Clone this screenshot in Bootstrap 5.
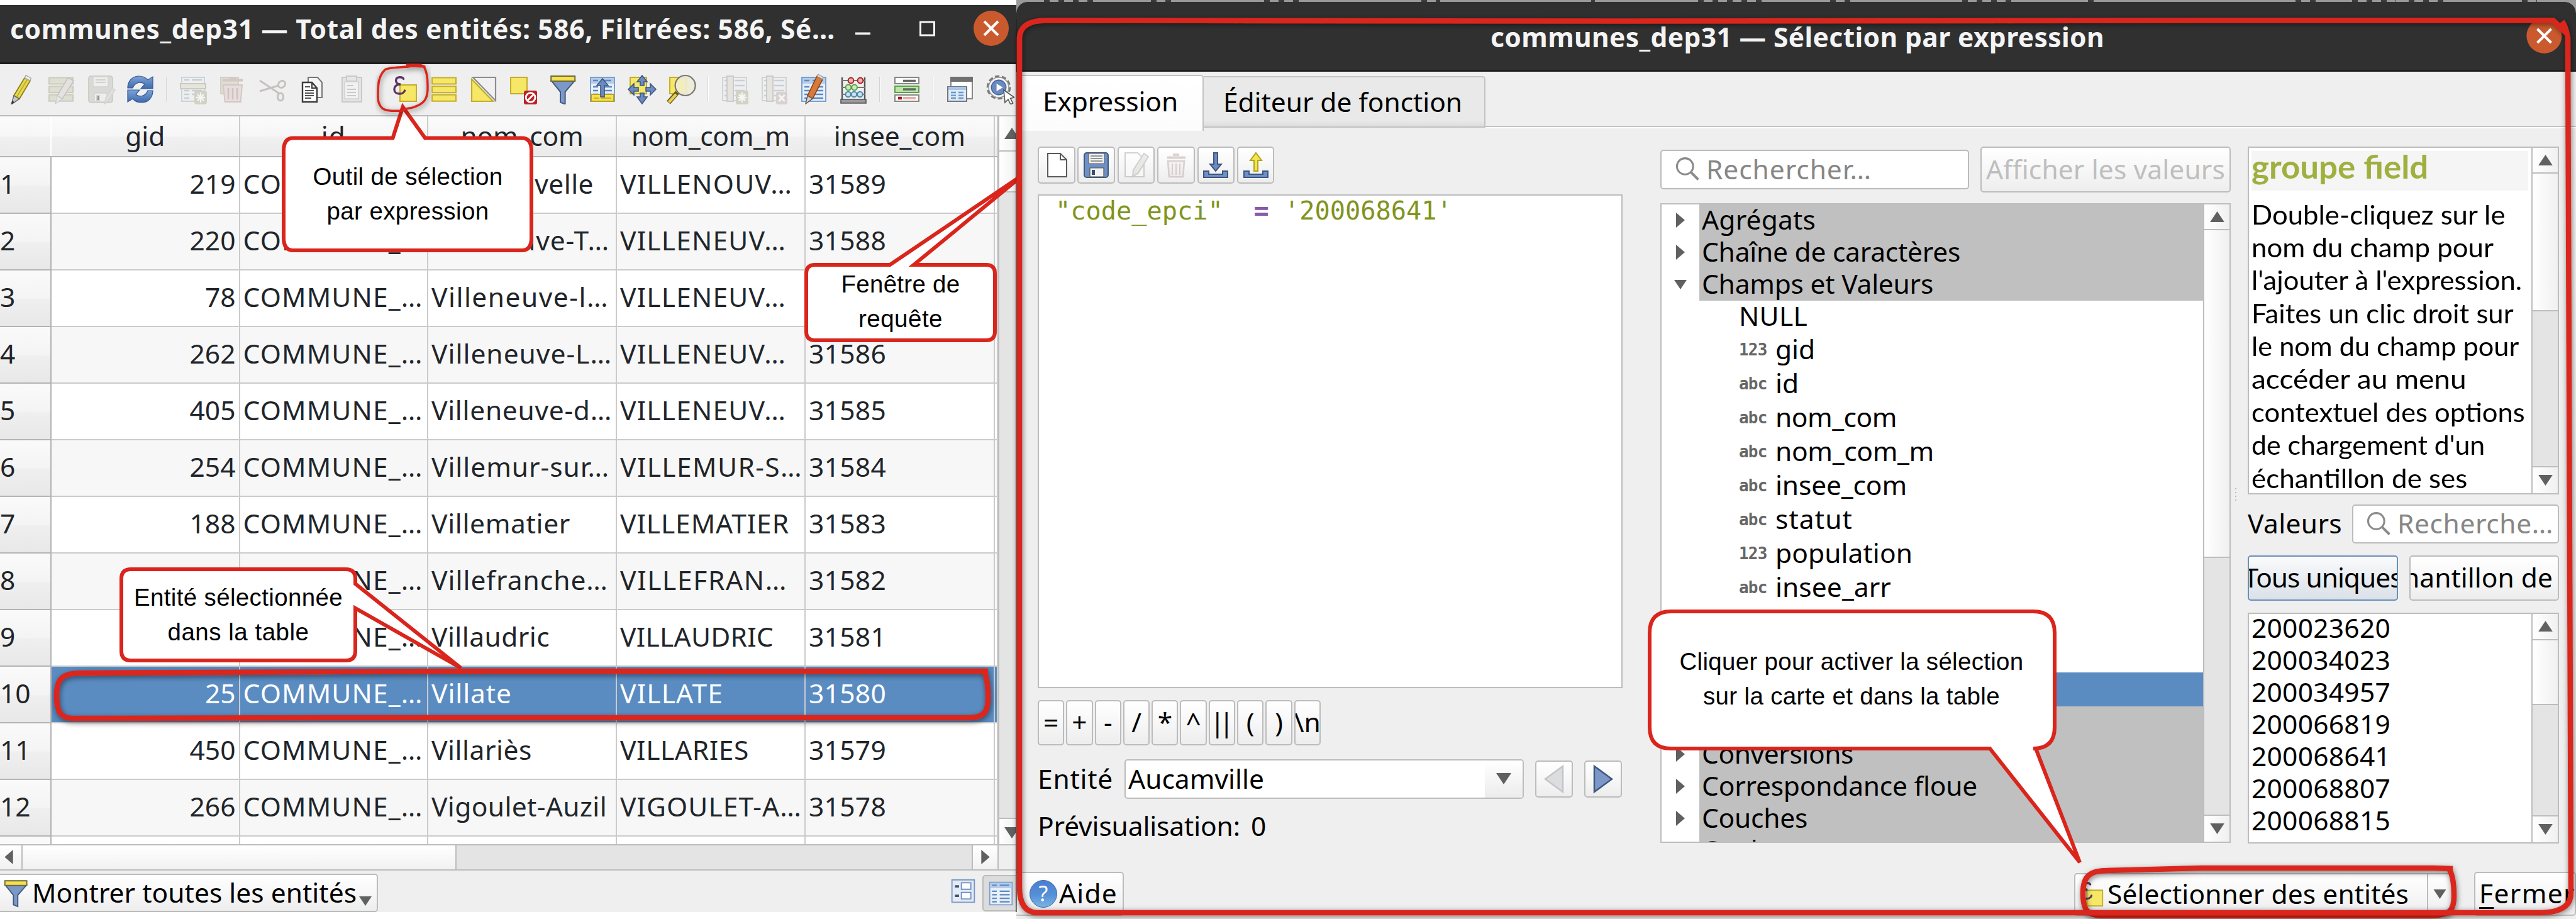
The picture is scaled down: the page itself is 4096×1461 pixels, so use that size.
<!DOCTYPE html>
<html lang="fr">
<head>
<meta charset="utf-8">
<title>communes_dep31 — Sélection par expression</title>
<link href="https://cdn.jsdelivr.net/npm/bootstrap@5.3.0/dist/css/bootstrap.min.css" rel="stylesheet">
<style>
:root{--line:#bdbdbd;--face:#efefef;--sel:#5a8cc2;--red:#da251c}
html,body{margin:0;background:#fff}
body{width:4096px;height:1461px;overflow:hidden;font-family:"Noto Sans","Open Sans",sans-serif;font-size:42.5px;line-height:1;color:#000}
.desk{width:4096px;height:1461px;overflow:hidden}
.t{display:inline-block;white-space:nowrap;flex:none}
svg{display:block;flex:none}
/* windows */
.attr-win{width:1616px;height:1442.5px;margin-top:7.5px;background:var(--face);overflow:hidden}
.titlebar{background:#303030;color:#f4f4f4;font-weight:700;border-bottom:3px solid #1e1e1e}
.attr-win .titlebar{height:94.5px}
.toolstrip{height:83px;border-bottom:2px solid #bbb;padding-left:2px}
.tool{width:63.05px;height:80px}
.toolsep{width:21px;height:80px}
.toolsep i{display:block;width:2px;height:40px;background:#fff;border-left:1px solid #d4d4d4}
.off{opacity:.42}
/* attribute table */
.grid-area{height:1156.5px}
.attr-table{width:1587px;table-layout:fixed;border-collapse:collapse;margin:0;background:#fff;--bs-table-bg:transparent}
.attr-table th,.attr-table td{padding:0 0 2px 5px!important;height:90px;border:2px solid #cbcbcb;border-left-width:0;border-top:0;vertical-align:middle;font-weight:400;white-space:nowrap;overflow:hidden;box-shadow:none!important}
.attr-table thead th{height:63.5px;text-align:center;padding:0!important;background:linear-gradient(#fbfbfb,#f6f6f6 50%,#f0f0f0 52%,#ebebeb);border-bottom:2.5px solid #b4b4b4}
.attr-table tbody th{padding-left:0!important;background:linear-gradient(#fafafa,#f4f4f4 50%,#efefef 52%,#e8e8e8);border-color:#b4b4b4}
.attr-table tbody tr:nth-child(even) td{background:#f7f7f7}
.attr-table tbody tr.picked td{background:var(--sel);color:#fff}
.attr-table td.num{text-align:right;padding-right:5px!important}
/* scroll bars */
.vbar{border-left:2px solid var(--line);background:#e4e4e4;flex:none}
.vbar .btnbox,.vbar .thumb{background:linear-gradient(90deg,#fff,#f0f0f0);border-bottom:2px solid var(--line)}
.vbar .btnbox.end{border-top:2px solid var(--line);border-bottom:0;margin-top:auto}
.hbar{height:42px;border-top:2px solid var(--line);border-bottom:2px solid var(--line);background:#e4e4e4}
.hbar div{background:linear-gradient(#fff,#f1f1f1);height:100%}
/* buttons and inputs */
.qb{background:linear-gradient(#fff,#f7f7f7 50%,#ededed);border:2px solid #bcbcbc;border-radius:5px;padding:0;overflow:hidden;color:#000;font-size:inherit;line-height:1;flex:none}
.inp{background:#fff;border:2px solid #bcbcbc;border-radius:5px;flex:none;overflow:hidden}
.box{background:#fff;border:2px solid var(--line);overflow:hidden;flex:none}
.bars{letter-spacing:-9px;margin-right:9px}
/* expression window */
.expr-col{width:2480px;height:1461px;background:#9a9a9a}
.expr-win{margin-top:3px;height:1458px;background:var(--face);border-radius:18px 18px 0 0;overflow:hidden}
.expr-win .titlebar{height:110.5px}
.tabs{height:89px}
.tab-on{width:298px;height:89px;margin-top:5px;background:linear-gradient(#fff,#fcfcfc);border:2px solid #c3c3c3;border-left:0;border-bottom:0;border-radius:0 5px 0 0}
.tab-off{width:448px;height:82px;margin-top:7px;background:linear-gradient(#e9e9e9 88%,#dcdcdc);border:2px solid #c3c3c3;border-left:0;border-radius:0 5px 0 0}
.tab-rest{height:88px;border-bottom:2px solid #c3c3c3;box-shadow:0 2px #fff}
.code{font-family:"DejaVu Sans Mono",monospace;font-size:40.3px;color:#7f9420;white-space:pre}
.code b{color:#8959a8}
.tree-row{height:51px}
.tree-row.f{height:54px}
.twist{width:60px;height:51px;background:#fff}
.grp{background:#c0c0c0;height:51px;padding:3px 0 0 4px}
.kind{font-family:"DejaVu Sans Mono",monospace;font-weight:700;font-size:26px;color:#666;width:58px;letter-spacing:-.8px}
.help{font-family:Lato,"Open Sans",sans-serif}
.help h1{font:inherit;font-weight:700;font-size:51px;color:#9fb03f;background:#f5f5f5;height:63px;margin:5px 5px 0 4px;line-height:50px;padding-left:0}
.help .t,.help h1 .t{transform-origin:0 50%}
.help .ln{height:52.4px;line-height:52.4px;padding-left:4px;white-space:nowrap}
.grey{color:#868686}
.notes{position:absolute;left:0;top:0}
.says{position:absolute;font-family:"Liberation Sans",Arial,sans-serif;font-size:38.5px;text-align:center;line-height:55.4px}
</style>
<script src="https://cdn.jsdelivr.net/npm/bootstrap@5.3.0/dist/js/bootstrap.bundle.min.js"></script>
</head>
<body>
<svg width="0" height="0" class="position-absolute">
 <defs>
  <linearGradient id="blu" x1="0" y1="0" x2="0" y2="1"><stop offset="0" stop-color="#7fa3d6"/><stop offset="1" stop-color="#3f69ab"/></linearGradient>
  <linearGradient id="hlp" x1="0" y1="0" x2="0" y2="1"><stop offset="0" stop-color="#4a7ed0"/><stop offset=".55" stop-color="#5590d6"/><stop offset="1" stop-color="#7cb4e6"/></linearGradient>
  <symbol id="pen" viewBox="0 0 24 24"><path d="M6 17 14.6 2.8 19 5.2 10.4 19.6Z" fill="#e8d94a" stroke="#8b7d1c" stroke-width=".9"/><path d="M8.2 18.2 16.8 4" stroke="#b7a82c" stroke-width=".8"/><path d="m14.6 2.8 1-1.9L19.6 3 19 5.2Z" fill="#f2f0ee" stroke="#aaa" stroke-width=".7"/><path d="M6 17 4 24l6.4-4.4Z" fill="#c9c4bd" stroke="#666" stroke-width=".7"/><path d="m4 24 .8-3 1.7 1.3Z" fill="#333"/></symbol>
  <symbol id="rows" viewBox="0 0 24 24"><g fill="#f6e866" stroke="#c4ad2c"><path d="M2.500 2.700h19v5h-19zM2.500 9.600h19v5h-19zM2.500 16.400h19v5h-19z"/></g></symbol>
  <symbol id="multi" viewBox="0 0 24 24"><g fill="#c9c7a8" stroke="#9c9a80"><path d="M2.500 2.700h19v5h-19zM2.500 9.600h19v5h-19zM2.500 16.400h19v5h-19z"/></g><path d="M9 17 17.600 2.800 22 5.200 13 19.600Z" fill="#d6cfc8" stroke="#8a8580" stroke-width=".8"/><path d="M9 17 7.500 23.500 13 19.600Z" fill="#ddd" stroke="#999" stroke-width=".6"/></symbol>
  <symbol id="save0" viewBox="0 0 24 24"><rect x="2.500" y="1.500" width="19" height="21" rx="2" fill="#bcbcb4" stroke="#a3a38f"/><path d="M6 2h12v8H6zM7 15h10v7H7z" fill="#eee" stroke="#aaa" stroke-width=".7"/><path d="M8 4.500h8M8 6.500h8M9 17h2v4H9z" stroke="#aaa"/><path d="m15 24 1-5 5-8 2.500 1.500-5 8Z" fill="#cfc7c2" stroke="#aaa" stroke-width=".6"/></symbol>
  <symbol id="sync" viewBox="0 0 24 24"><path d="M2 11C2 5 6 1.500 11 1.500c3 0 5.300 1 7 3L22 2v9.500H12.500L15.500 8C13 5.700 8 6 6 11Z" fill="url(#blu)" stroke="#2f5a9c" stroke-width=".6"/><path d="M22 13c0 6-4 9.500-9 9.500-3 0-5.300-1-7-3L2 22v-9.500h9.500L8.500 16c2.500 2.300 7.500 2 9.500-3Z" fill="url(#blu)" stroke="#2f5a9c" stroke-width=".6"/></symbol>
  <symbol id="addrow" viewBox="0 0 24 24"><path d="M3 2.500h18v19H3z" fill="#eef1f3" stroke="#9db0bd"/><path d="M5 4.500h4M11 4.500h8M5 13h4M11 13h8M5 16h4M11 16h5M5 19h4" stroke="#8fa2b2" stroke-width="1.300"/><path d="M2 7.500h20v4H2z" fill="#d8d8c8" stroke="#999980"/><rect x="13" y="13" width="10" height="11" rx="2" fill="#a9a98d"/><path d="M18 14.500v8M14.500 18.500h7M15.500 16l5 5M20.500 16l-5 5" stroke="#fff" stroke-width="1.200"/></symbol>
  <symbol id="bin0" viewBox="0 0 24 24"><path d="M2.500 2.500h14v13h-14z" fill="#c9c7a8" stroke="#a9a78c"/><path d="M4 4.700h16M9 3.500h6" stroke="#b39090" stroke-width="2"/><path d="M4.500 8.500h15l-1.200 13.500h-12.500z" fill="#dcc9c6" stroke="#b39090"/><path d="M8.500 11v9M12 11v9M15.500 11v9" stroke="#a98484" stroke-width="1.300"/></symbol>
  <symbol id="cut0" viewBox="0 0 24 24" ><g fill="none" stroke="#8f8484" stroke-width="1.500"><path d="M2 5 17 15M2 13.500 17 9"/><ellipse cx="19.500" cy="8" rx="3" ry="2.500" transform="rotate(-40 19.500 8)"/><ellipse cx="18.500" cy="18" rx="2.300" ry="3"/></g></symbol>
  <symbol id="copy" viewBox="0 0 24 24"><path d="M9 2.500h7.500l3.500 4v12H9z" fill="#f5f5f5" stroke="#777"/><path d="M4.500 6.500h7.500l4 4.500v11H4.500z" fill="#fff" stroke="#3c3c3c" stroke-width="1.200"/><path d="M12 6.500v4.500h4" fill="none" stroke="#3c3c3c"/><path d="M6.500 10h4M6.500 13h7M6.500 15h7M6.500 17h7M6.500 19h5" stroke="#555" stroke-width=".9"/></symbol>
  <symbol id="paste0" viewBox="0 0 24 24"><path d="M4.500 2.500h15.500v19.500h-15.500z" fill="#d3d3cb" stroke="#999"/><path d="M8 1.500h8v4H8z" fill="#ddd" stroke="#999"/><path d="M6.500 6h11v13.500h-11z" fill="#f6f6f6" stroke="#aaa" stroke-width=".8"/><path d="M8.500 9h5M8.500 12h7M8.500 14.500h7M8.500 17h7" stroke="#999"/></symbol>
  <symbol id="eps" viewBox="0 0 24 24"><path d="M8.500 8.500h13v13h-13z" fill="#f6e866" stroke="#c4ad2c"/><path d="M11.300 3.700C10.500 1.800 5.300 1.700 5.300 5c0 2.300 2.200 3 3.700 3-3 0-5 1.500-5 4.200 0 4.300 7.200 4.300 8.300.8" fill="none" stroke="#5c3566" stroke-width="1.700" stroke-linecap="round"/></symbol>
  <symbol id="invert" viewBox="0 0 24 24"><path d="M3.500 2.500h18v18.500z" fill="#f0f0f0" stroke="#8c8c8c" stroke-width="1.100"/><path d="M2.500 4v17.500h17z" fill="#f6e866" stroke="#c4ad2c" stroke-width="1.100"/></symbol>
  <symbol id="desel" viewBox="0 0 24 24"><path d="M2 2.500h13v13H2z" fill="#f6e866" stroke="#c4ad2c"/><rect x="12.500" y="13" width="10.500" height="11" rx="1.500" fill="#bd2126"/><circle cx="17.800" cy="18.500" r="3.700" fill="none" stroke="#fff" stroke-width="1.400"/><path d="m15.300 21 5-5" stroke="#fff" stroke-width="1.400"/></symbol>
  <symbol id="fun" viewBox="0 0 24 24"><path d="M3 5.300 10 14v8.300l3.800 1.500V14L21.300 5.300z" fill="#7b98c8" stroke="#41597f"/><path d="M2.600 1.500h19v4h-19z" fill="#f6e14c" stroke="#6b6a3c"/></symbol>
  <symbol id="form" viewBox="0 0 24 24"><path d="M2.500 2.500h19v19h-19z" fill="#e7f0fa" stroke="#7ba0d0"/><path d="M3 3h18v4.500H3z" fill="#b5cdea"/><path d="M4.500 5h4M11 5h8M4.500 10h4M11 10h8.500M4.500 13h4M11 13h8.500M4.500 16h4M11 16h8.500M4.500 19h4M11 19h8.500" stroke="#5f88be" stroke-width="1.200"/></symbol>
  <symbol id="top" viewBox="0 0 24 24"><use href="#form"/><path d="M3 16h18v5.500H3z" fill="#f6e14c" stroke="#b9a226"/><path d="M5 19h4M11 19h8" stroke="#c9b22e"/><path d="M12 3.500 16.500 9h-3v9h-3V9h-3z" fill="#6b8bc0" stroke="#3d5680" stroke-width=".8"/></symbol>
  <symbol id="pan" viewBox="0 0 24 24"><path d="M2.500 2.500h13v13h-13z" fill="#f6e866" stroke="#c4ad2c"/><path d="M12 1l4 5h-2.500v3h-3V6H8zM12 23.500 8 18h2.500v-3h3v3H16zM1 12l4.500-4.500V10.500H9v3H5.500v3zM23 12l-4.500 4.500v-3H15v-3h3.500v-3z" fill="#6b8bc0" stroke="#3d5680" stroke-width=".8"/></symbol>
  <symbol id="zoomsel" viewBox="0 0 24 24"><path d="M2.500 2.500h13v13h-13z" fill="#f6e866" stroke="#c4ad2c"/><path d="M8.500 14.500 1.500 22.500" stroke="#6b5a18" stroke-width="3.800"/><path d="M7.500 16 1.800 22.200" stroke="#e9cf55" stroke-width="2.200"/><circle cx="14.800" cy="9" r="8" fill="#ecebd6" fill-opacity=".92" stroke="#777" stroke-width="1.100"/><path d="M9.500 3.800h5v10h-5z" fill="#f3eeb0" opacity=".7"/></symbol>
  <symbol id="col0" viewBox="0 0 24 24"><path d="M2.500 2.500h19v18.500h-19z" fill="#eef1f3" stroke="#a5b0b8"/><path d="M4 5h3M12 5h8M4 9h3M12 9h8M4 13h3M12 13h8M4 17h3M12 17h8" stroke="#98a6b2" stroke-width="1.200"/><path d="M6 1.500h5v20H6z" fill="#d8d5cc" stroke="#a09c92"/></symbol>
  <symbol id="coladd" viewBox="0 0 24 24"><use href="#col0"/><rect x="13" y="13" width="10" height="11" rx="1.500" fill="#a9a98d"/><path d="M18 14.500v8M14.500 18.500h7M15.500 16l5 5M20.500 16l-5 5" stroke="#fff" stroke-width="1.300"/></symbol>
  <symbol id="coldel" viewBox="0 0 24 24"><use href="#col0"/><rect x="13.500" y="14" width="9" height="10" rx="1.500" fill="#b9a8a4"/><path d="M15.700 16.500l4.600 5M20.300 16.500l-4.600 5" stroke="#fff" stroke-width="1.500"/></symbol>
  <symbol id="cfmt" viewBox="0 0 24 24"><use href="#form"/><path d="M7 17 14.500 1.500 19 4 11 19.500Z" fill="#d9793a" stroke="#8a4314" stroke-width=".8"/><path d="m14.500 1.500.8-1.500 4 2.200-.3 1.800z" fill="#e9e3dc" stroke="#999" stroke-width=".6"/><path d="M7 17 5.500 23.500l5.500-4z" fill="#d8d0c8" stroke="#555" stroke-width=".7"/></symbol>
  <symbol id="abac" viewBox="0 0 24 24"><path d="M3 2.500V21M21 2.500V21" stroke="#555" stroke-width="1.200"/><path d="M3 5h18M3 10.500h18M3 16h18" stroke="#777"/><path d="M2 20h20v3H2z" fill="#9a9a9a" stroke="#555" stroke-width=".8"/><g stroke-width="1"><g fill="#e9b4b4" stroke="#a82020"><ellipse cx="10" cy="5" rx="2.200" ry="2.200"/><ellipse cx="17.500" cy="5" rx="2.200" ry="2.200"/></g><g fill="#c9efbd" stroke="#5d9b4a"><ellipse cx="8" cy="10.500" rx="2.200" ry="2.200"/><ellipse cx="12.800" cy="10.500" rx="2.200" ry="2.200"/></g><g fill="#c9e4f3" stroke="#4b87a8"><circle cx="7.800" cy="16" r="2.100"/><circle cx="12.500" cy="16" r="2.100"/><circle cx="17.200" cy="16" r="2.100"/></g></g></symbol>
  <symbol id="cond" viewBox="0 0 24 24"><path d="M2.500 2.500h19v5h-19z" fill="#fff" stroke="#888"/><path d="M2.500 9.500h19v5h-19z" fill="#b9e6a5" stroke="#5ea049"/><path d="M2.500 16.500h19v5h-19z" fill="#fff" stroke="#888"/><path d="M9 5.200h10M9 12h10" stroke="#666" stroke-width="1.700"/><path d="M5 19h3" stroke="#9a1c1c" stroke-width="2.200"/><path d="M9 19h10" stroke="#e9a9a9" stroke-width="1.900"/></symbol>
  <symbol id="dock" viewBox="0 0 24 24"><path d="M5 2.500h17v17H5z" fill="#fff" stroke="#888"/><path d="M4.500 2h18v4h-18z" fill="#707070"/><path d="M2.500 10h15v11.500h-15z" fill="#dceafa" stroke="#777"/><path d="M3 10h14v2.500H3z" fill="#a9c6ea"/><path d="M5 14.500h4M11 14.500h4M5 16.800h4M11 16.800h4M5 19h4M11 19h4" stroke="#6d96cd" stroke-width="1.200"/></symbol>
  <symbol id="act" viewBox="0 0 24 24"><circle cx="11.500" cy="10.500" r="8.700" fill="#efefef" stroke="#777" stroke-width="1.900" stroke-dasharray="3.500 1.900"/><circle cx="11.500" cy="10.500" r="8" fill="#f4f4f4" stroke="#999" stroke-width=".8"/><circle cx="11.500" cy="10.500" r="5.800" fill="#6b8bc0" stroke="#41659f" stroke-width=".8"/><path d="m9.800 7.500 5 3-5 3z" fill="#fff"/><path d="M15.500 12.500 16.500 22.500l2.500-2.500 2 4 1.800-1-2-3.800 3.200-.7z" fill="#fff" stroke="#555" stroke-width=".8"/></symbol>
  <symbol id="lens" viewBox="0 0 24 24"><circle cx="10" cy="9.500" r="7" fill="none" stroke="#8b8b8b" stroke-width="1.700"/><path d="m15 14.500 6.500 6.500" stroke="#8b8b8b" stroke-width="2.200"/></symbol>
  <symbol id="page" viewBox="0 0 24 24"><path d="M5 3h10l5 5v13.500H5z" fill="#fff" stroke="#5a5a5a"/><path d="M15 3v5h5" fill="none" stroke="#5a5a5a"/></symbol>
  <symbol id="disk" viewBox="0 0 24 24"><rect x="2.500" y="2.500" width="19" height="19.500" rx="2" fill="#6f90c4" stroke="#41597f"/><path d="M6 3h12.500v8H6z" fill="#f3f3f3" stroke="#666" stroke-width=".6"/><path d="M7.500 5h9.500M7.500 7h9.500M7.500 9h9.500" stroke="#777" stroke-width=".8"/><path d="M7 14.500h11V21.500H7z" fill="#f3f3f3" stroke="#555" stroke-width=".6"/><path d="M8.500 16h2.500v4H8.500z" fill="#35507c"/></symbol>
  <symbol id="pgpen" viewBox="0 0 24 24"><path d="M3 2.500h10l5 5v14H3z" fill="#fff" stroke="#999"/><path d="M9.500 16 18 3l3.500 2.500L13.500 18.500 9 21.500z" fill="#d6d3cc" stroke="#999"/></symbol>
  <symbol id="bin1" viewBox="0 0 24 24"><path d="M5 6.200h14.500M9.500 4h5" stroke="#b39a9a" stroke-width="2"/><path d="M5.500 9h13l-1 12.500H6.500z" fill="#efe6e5" stroke="#b39a9a" stroke-width="1.300"/><path d="M9 11v9M12 11v9M15 11v9" stroke="#b39a9a"/></symbol>
  <symbol id="imp" viewBox="0 0 24 24"><path d="M10.500 2.500h3v9H16.500L12 17 7.500 11.500h3z" fill="#6b8bc0" stroke="#3d5680"/><path d="M2.500 17h4v2.500h11V17h4v5h-19z" fill="#6f90c4" stroke="#3d5680"/></symbol>
  <symbol id="exp" viewBox="0 0 24 24"><path d="M12 2.500 16.500 8.500h-3v8.500h-3V8.500h-3z" fill="#f4e550" stroke="#b1a51c"/><path d="M2.500 17h4v2.500h11V17h4v5h-19z" fill="#6f90c4" stroke="#3d5680"/></symbol>
  <symbol id="fview" viewBox="0 0 24 24"><path d="M2.500 2.500h19v19h-19z" fill="#e3ebf6" stroke="#7b96c4"/><path d="M5 8h3.500M5 16h3.500" stroke="#43536e" stroke-width="2"/><path d="M10.500 5h8v5.500h-8zM10.500 13.200h8v5.500h-8z" fill="#fff" stroke="#6f90c8"/></symbol>
  <symbol id="up" viewBox="0 0 24 18"><path d="M12 0 24 18H0z" fill="#606060"/></symbol>
  <symbol id="dn" viewBox="0 0 24 18"><path d="M0 0h24L12 18z" fill="#606060"/></symbol>
  <symbol id="lt" viewBox="0 0 14 24"><path d="M14 0v24L0 12z" fill="#606060"/></symbol>
  <symbol id="rt" viewBox="0 0 14 24"><path d="M0 0v24L14 12z" fill="#606060"/></symbol>
 </defs>
</svg>

<main class="desk d-flex position-relative">
 <!-- attribute table window -->
 <section class="attr-win flex-shrink-0 d-flex flex-column">
  <header class="titlebar d-flex align-items-center flex-shrink-0">
   <span class="t" style="padding:0 0 15px 16px" data-w="1307">communes_dep31 — Total des entités: 586, Filtrées: 586, Sé…</span>
   <svg class="ms-auto" width="256" height="91" viewBox="1360 7.500 256 91"><path d="M1360 51h24v3.500h-24z" fill="#f4f4f4"/><rect x="1463.500" y="34.500" width="22" height="21" fill="none" stroke="#f4f4f4" stroke-width="3"/><circle cx="1576" cy="44.500" r="28" fill="#ca5a2e"/><path d="m1565 33.500 22 22m0-22-22 22" stroke="#fff" stroke-width="4"/></svg>
  </header>
  <div class="toolstrip d-flex flex-shrink-0" id="tools"></div>
  <div class="grid-area d-flex flex-shrink-0 overflow-hidden">
   <table class="table attr-table flex-shrink-0">
    <colgroup><col style="width:81px"><col style="width:299.500px"><col style="width:299.500px"><col style="width:300px"><col style="width:300px"><col style="width:300.500px"><col></colgroup>
    <thead><tr><th style="border-right-color:transparent"></th><th><span class="t" data-w="58">gid</span></th><th><span class="t" data-w="34">id</span></th><th><span class="t" data-w="190">nom_com</span></th><th><span class="t" data-w="247">nom_com_m</span></th><th><span class="t" data-w="204">insee_com</span></th><th></th></tr></thead>
    <tbody id="rowsbody"></tbody>
   </table>
   <div class="vbar d-flex flex-column flex-grow-1">
    <div class="btnbox" style="height:56px"><svg width="20" height="18" viewBox="0 0 20 18" style="margin:18px 0 0 8px"><path d="M12 0 24 18H0z" fill="#606060"/></svg></div>
    <div class="thumb" style="height:65px"></div>
    <div class="btnbox end" style="height:42px"><svg width="20" height="18" viewBox="0 0 20 18" style="margin:13px 0 0 8px"><path d="M0 0h24L12 18z" fill="#606060"/></svg></div>
   </div>
  </div>
  <div class="hbar d-flex flex-shrink-0">
   <div class="d-flex align-items-center" style="width:36px;border-right:2px solid var(--line);padding-left:7px"><svg width="14" height="23"><use href="#lt"/></svg></div>
   <div style="width:690px;border-right:2px solid var(--line)"></div>
   <div class="ms-auto d-flex align-items-center justify-content-center" style="width:43px;border-left:2px solid var(--line);border-right:2px solid var(--line)"><svg width="14" height="23"><use href="#rt"/></svg></div>
   <div style="width:28px;background:var(--face)"></div>
  </div>
  <footer class="d-flex flex-grow-1">
   <div class="qb d-flex align-items-center" style="margin:5px 0 0 -4px;width:605px;height:61px"><svg width="44" height="47" style="margin-left:5px"><use href="#fun" width="44" height="47"/></svg><span class="t ms-1" data-w="511">Montrer toutes les entités</span><svg width="22" height="15" class="align-self-end mb-2" style="margin-left:3px"><use href="#dn"/></svg></div>
   <svg class="ms-auto" width="45" height="45" style="margin-top:10px"><use href="#fview"/></svg>
   <div style="width:58px;height:58px;margin:7px -4px 0 8px;background:#dcdcdc;border:2px solid #bbb;border-radius:5px;overflow:hidden"><svg width="45" height="45" style="margin:5px 0 0 5px"><use href="#form"/></svg></div>
  </footer>
 </section>

 <!-- expression dialog -->
 <section class="expr-col flex-shrink-0">
  <div class="expr-win d-flex flex-column">
   <header class="titlebar d-flex align-items-center flex-shrink-0">
    <span class="t" style="margin-left:754px;padding-top:4px" data-w="971">communes_dep31 — Sélection par expression</span>
    <svg class="ms-auto" width="80" height="107" viewBox="4016 3 80 107"><circle cx="4045.400" cy="57" r="28" fill="#ca5a2e"/><path d="m4034.500 46 22 22m0-22-22 22" stroke="#fff" stroke-width="4"/></svg>
   </header>
   <nav class="tabs d-flex flex-shrink-0">
    <div class="tab-on flex-shrink-0"><span class="t" style="padding:19px 0 0 42px" data-w="210">Expression</span></div>
    <div class="tab-off flex-shrink-0"><span class="t" style="padding:18px 0 0 31px" data-w="375">Éditeur de fonction</span></div>
    <div class="tab-rest flex-grow-1"></div>
   </nav>
   <div class="d-flex flex-shrink-0" style="padding:30px 0 0 34px;height:1138px">
    <!-- editor -->
    <div class="d-flex flex-column flex-shrink-0" style="width:930px">
     <div class="d-flex" id="edtools" style="gap:3.900px;height:59px"></div>
     <div class="box" style="margin-top:17px;height:785.500px;padding:1px 0 0 26px"><div class="code t">"code_epci"  <b>=</b> '200068641'</div></div>
     <div class="d-flex" id="ops" style="margin-top:18.500px;gap:3px;height:72px"></div>
     <div class="d-flex align-items-center" style="margin-top:22px;height:63px">
      <span class="t" style="width:138px" data-w="115">Entité</span>
      <div class="inp d-flex align-items-center" style="width:635px;height:63px"><span class="t" style="padding-left:4px" data-w="211">Aucamville</span><div class="ms-auto d-flex align-items-center justify-content-center h-100" style="width:60px;background:linear-gradient(#fff,#ececec)"><svg width="24" height="18"><use href="#dn"/></svg></div></div>
      <div class="qb" style="width:60px;height:59px;margin-left:18px"><svg width="56" height="55" viewBox="0 0 56 55"><path d="M42 7v41L14 27.500z" fill="#dcdddf" stroke="#c3c5c8" stroke-width="2.500"/></svg></div>
      <div class="qb" style="width:60px;height:59px;margin-left:18px"><svg width="56" height="55" viewBox="0 0 56 55"><path d="M14 7v41l28-20.500z" fill="#7b98c8" stroke="#41597f" stroke-width="2.500"/></svg></div>
     </div>
     <div class="d-flex" style="margin-top:22px"><span class="t" style="width:339px" data-w="317">Prévisualisation:</span><span class="t">0</span></div>
    </div>
    <!-- function tree -->
    <div class="d-flex flex-column flex-shrink-0" style="width:907px;margin-left:60px">
     <div class="d-flex align-items-center" style="height:73px">
      <div class="inp d-flex align-items-center" style="width:491px;height:63px"><svg width="44" height="44" style="margin-left:19px"><use href="#lens"/></svg><span class="t grey" style="margin-left:8px" data-w="258">Rechercher…</span></div>
      <div class="qb d-flex align-items-center ms-auto" style="width:398px;height:73px;color:#bebebe"><span class="t" style="margin-left:7px" data-w="375">Afficher les valeurs</span></div>
     </div>
     <div class="box d-flex" style="margin-top:17px;height:1017px">
      <div class="flex-grow-1 overflow-hidden" id="tree"></div>
      <div class="vbar d-flex flex-column" style="width:42px">
       <div class="btnbox d-flex align-items-center justify-content-center" style="height:41px"><svg width="23" height="17"><use href="#up"/></svg></div>
       <div class="thumb" style="height:521px"></div>
       <div class="btnbox end d-flex align-items-center justify-content-center" style="height:43px"><svg width="23" height="17"><use href="#dn"/></svg></div>
      </div>
     </div>
    </div>
    <div class="d-flex align-items-start justify-content-center flex-shrink-0" style="width:27px;padding:543px 11px 0 0"><i style="width:2px;height:24px;background:repeating-linear-gradient(#bbb 0 2px,transparent 2px 6px)"></i></div>
    <!-- help and values -->
    <div class="d-flex flex-column flex-shrink-0" style="width:495px">
     <div class="box d-flex" style="height:553px">
      <div class="help flex-grow-1 overflow-hidden"><h1><span class="t" data-x="276">groupe field</span></h1><div id="helptext" style="margin-top:12px"></div></div>
      <div class="vbar d-flex flex-column" style="width:42px">
       <div class="btnbox d-flex align-items-center justify-content-center" style="height:41px"><svg width="23" height="17"><use href="#up"/></svg></div>
       <div class="thumb" style="height:219px"></div>
       <div class="btnbox end d-flex align-items-center justify-content-center" style="height:43px"><svg width="23" height="17"><use href="#dn"/></svg></div>
      </div>
     </div>
     <div class="d-flex align-items-center" style="margin-top:16px;height:62px"><span class="t" data-w="145">Valeurs</span>
      <div class="inp d-flex align-items-center ms-auto" style="width:329px;height:62px"><svg width="44" height="44" style="margin-left:18px"><use href="#lens"/></svg><span class="t grey" style="margin-left:8px" data-w="243">Recherche…</span></div></div>
     <div class="d-flex justify-content-between" style="margin-top:19px;height:72px">
      <div class="qb d-flex align-items-center justify-content-center" style="width:239px;border-color:#6a8fb8;background:linear-gradient(#fafbfc,#e9edf2 50%,#dbe1e8)"><span class="t" data-w="247">Tous uniques</span></div>
      <div class="qb d-flex align-items-center justify-content-end" style="width:238px"><span class="t" style="margin-right:8px" data-w="277">Échantillon de</span></div>
     </div>
     <div class="box d-flex" style="margin-top:19px;height:367px">
      <div class="flex-grow-1 overflow-hidden" id="vals" style="padding-top:1px"></div>
      <div class="vbar d-flex flex-column" style="width:42px">
       <div class="btnbox d-flex align-items-center justify-content-center" style="height:42px"><svg width="23" height="17"><use href="#up"/></svg></div>
       <div class="thumb" style="height:103px"></div>
       <div class="btnbox end d-flex align-items-center justify-content-center" style="height:43px"><svg width="23" height="17"><use href="#dn"/></svg></div>
      </div>
     </div>
    </div>
   </div>
   <footer class="d-flex flex-grow-1" style="padding-top:45px">
    <div class="qb d-flex align-items-center" style="width:174px;height:70px;margin-left:-3px"><svg width="46" height="46" viewBox="0 0 46 46" style="margin-left:21px"><circle cx="23" cy="23" r="21.500" fill="url(#hlp)" stroke="#3e6cab"/><text x="23" y="35" text-anchor="middle" font-size="34" fill="#fff" font-family="Noto Sans">?</text></svg><span class="t" style="margin-left:2px" data-w="88">Aide</span></div>
    <div class="qb d-flex align-items-center" style="width:602px;height:68px;margin:2px 0 0 1511px"><svg width="46" height="46" style="margin-left:2px"><use href="#eps"/></svg><span class="t" style="margin-left:3px" data-w="474">Sélectionner des entités</span><div class="h-100 d-flex align-items-center justify-content-center ms-auto" style="border-left:2px solid #bcbcbc;width:39px"><svg width="23" height="15"><use href="#dn"/></svg></div></div>
    <div class="qb d-flex align-items-center" style="width:162px;height:70px;margin-left:34px"><span class="t" style="margin-left:6px" data-w="148"><u style="text-underline-offset:6px;text-decoration-thickness:3px">F</u>ermer</span></div>
   </footer>
  </div>
 </section>

 <!-- red annotations -->
 <svg class="notes" width="4096" height="1461" viewBox="0 0 4096 1461">
  <defs><filter id="sh" x="-5%" y="-20%" width="110%" height="140%"><feDropShadow dx="1" dy="3" stdDeviation="4" flood-opacity=".5"/></filter>
  <filter id="sh2" filterUnits="userSpaceOnUse" x="1600" y="0" width="2496" height="1461"><feDropShadow dx="1" dy="2" stdDeviation="4" flood-opacity=".5"/></filter>
  <clipPath id="leftside"><path d="M0 0h1619v1461H0z"/></clipPath></defs>
  <path d="M1660 1.500h90M1830 1.500h40M2010 1.500h60M2260 1.500h30M2530 1.500h6M2700 1.500h115M2910 1.500h40M3120 1.500h80M3320 1.500h12M3650 1.500h46M3740 1.500h70M3830 1.500h55M4010 1.500h24" stroke="#3a3a3a" stroke-width="3" stroke-dasharray="9 14"/>
  <path d="M1615.800 30V1450" stroke="#222" stroke-width="1.500"/>
  <g fill="#fff" stroke="#da251c" stroke-width="6">
   <path d="M467 219.500H624.500L640.500 170 676 219.500H830q15 0 15 20V378q0 20-15 20H466q-15 0-15-20V239.500q0-20 15-20Z"/>
   <path clip-path="url(#leftside)" d="M1415 421 1632 274 1453 421H1568q14 0 14 14v92q0 14-14 14H1296q-14 0-14-14v-92q0-14 14-14Z"/>
   <path d="M208 905H550q15 0 15 15v8L733 1062 565 967v68q0 15-15 15H208q-15 0-15-15V920q0-15 15-15Z"/>
   <path d="M2657 972H3233q34 0 34 34v150q0 34-34 34h4l70 181L3164 1190H2657q-34 0-34-34v-150q0-34 34-34Z"/>
  </g>
  <g fill="none" stroke="#da251c" stroke-linejoin="round">
   <g filter="url(#sh)">
    <path stroke-width="3.500" d="M646 103h21l8 3-20-1c-14 3-36 1-43 6-10 10-11 22-11 40 0 10 1 16 8 22 8 5 28 3 32 3 4-5 12-3 18-6 14-5 22-11 21-34 0-12-1-22-6-30"/>
   </g>
   <g filter="url(#sh)"><path stroke-width="8.500" d="M1571 1067 1545 1067H700L130 1070C100 1070 90 1078 90 1105s6 38 30 37l400-1H1540C1566 1141 1571 1130 1571 1110q0-30-6-42"/></g>
   <g filter="url(#sh)"><path stroke-width="8.500" d="M3900 1381 3870 1380H3500L3350 1384C3320 1384 3312 1396 3312 1420c0 28 8 36 34 36H3860C3895 1456 3902 1448 3902 1425q0-30-7-42"/></g>
   <g filter="url(#sh2)"><path stroke-width="8.500" d="M4082 54 4060 32.500H3500L2600 33.500 1665 32.500Q1621 32 1621 62V1410Q1621 1451 1650 1451H4040Q4088 1450 4088 1420L4083 60Q4080 42 4074 34"/></g>
  </g>
 </svg>
 <div class="says" style="left:451px;top:253px;width:395px"><span class="t" data-w="297">Outil de sélection</span><br><span class="t" data-w="253">par expression</span></div>
 <div class="says" style="left:1282px;top:424px;width:300px"><span class="t" data-w="184">Fenêtre de</span><br><span class="t" data-w="129">requête</span></div>
 <div class="says" style="left:193px;top:922px;width:372px"><span class="t" data-w="327">Entité sélectionnée</span><br><span class="t" data-w="220">dans la table</span></div>
 <div class="says" style="left:2623px;top:1024px;width:642px"><span class="t" data-w="542">Cliquer pour activer la sélection</span><br><span class="t" data-w="467">sur la carte et dans la table</span></div>
</main>

<script>
const $ = id => document.getElementById(id);
const ic = (n, off) => `<svg width="48" height="48"${off ? ' class="off"' : ''}><use href="#${n}"/></svg>`;
$('tools').innerHTML = 'pen multi! save0! sync | addrow! bin0! cut0! copy paste0! | eps rows invert desel fun top pan zoomsel | coladd! coldel! cfmt abac | cond | dock act'
  .split(' ').map(n => n === '|' ? '<div class="toolsep d-flex align-items-center justify-content-center flex-shrink-0"><i></i></div>'
    : `<div class="tool d-flex align-items-center justify-content-center flex-shrink-0">${ic(n.replace('!', ''), n.endsWith('!'))}</div>`).join('');
const data = [
 [219,'Villenouvelle',253,'VILLENOUV…',269,31589],[220,'Villeneuve-T…',278,'VILLENEUV…',259,31588],
 [78,'Villeneuve-l…',277,'VILLENEUV…',259,31587],[262,'Villeneuve-L…',282,'VILLENEUV…',259,31586],
 [405,'Villeneuve-d…',282,'VILLENEUV…',259,31585],[254,'Villemur-sur…',278,'VILLEMUR-S…',285,31584],
 [188,'Villematier',216,'VILLEMATIER',264,31583],[76,'Villefranche…',276,'VILLEFRAN…',261,31582],
 [171,'Villaudric',183,'VILLAUDRIC',239,31581],[25,'Villate',123,'VILLATE',159,31580],
 [450,'Villariès',155,'VILLARIES',200,31579],[266,'Vigoulet-Auzil',274,'VIGOULET-A…',284,31578]];
$('rowsbody').innerHTML = data.map((r, i) => `<tr${i === 9 ? ' class="picked"' : ''}><th>${i + 1}</th><td class="num">${r[0]}</td><td><span class="t" data-w="281">COMMUNE_…</span></td><td><span class="t" data-w="${r[2]}">${r[1]}</span></td><td><span class="t" data-w="${r[4]}">${r[3]}</span></td><td><span class="t" data-w="118">${r[5]}</span></td><td></td></tr>`).join('')
  + '<tr><th></th>' + '<td></td>'.repeat(6) + '</tr>';
$('edtools').innerHTML = 'page disk pgpen! bin1! imp exp'.split(' ').map(n => `<div class="qb d-flex align-items-center justify-content-center" style="width:59.500px">${ic(n.replace('!', ''), n.endsWith('!'))}</div>`).join('');
$('ops').innerHTML = ['=','+','-','/','*','^','||','(',')','\\n'].map(o => `<div class="qb d-flex align-items-center justify-content-center" style="width:42.300px"><span class="t${o === '||' ? ' bars' : ''}">${o}</span></div>`).join('');
const grp = (n, w, open) => `<div class="tree-row d-flex"><div class="twist d-flex align-items-center justify-content-center flex-shrink-0">${open ? '<svg width="24" height="15"><use href="#dn"/></svg>' : '<svg width="14" height="24"><use href="#rt"/></svg>'}</div><div class="grp flex-grow-1"><span class="t" data-w="${w}">${n}</span></div></div>`;
const fld = (k, n, w) => `<div class="tree-row f d-flex align-items-center" style="padding-left:123px"><span class="kind">${k}</span><span class="t" data-w="${w}">${n}</span></div>`;
$('tree').innerHTML = grp('Agrégats',176) + grp('Chaîne de caractères',406) + grp('Champs et Valeurs',363,1)
 + '<div class="tree-row" style="padding:3px 0 0 123px"><span class="t" data-w="104">NULL</span></div>'
 + fld('123','gid',58) + fld('abc','id',32) + fld('abc','nom_com',188) + fld('abc','nom_com_m',247) + fld('abc','insee_com',204)
 + fld('abc','statut',118) + fld('123','population',213) + fld('abc','insee_arr',179) + fld('abc','insee_dep',200) + '<div class="tree-row f"></div>'
 + '<div style="height:54px;padding-left:60px"><div class="h-100" style="background:var(--sel)"></div></div>'
 + '<div class="tree-row d-flex"><div class="twist flex-shrink-0"></div><div class="grp flex-grow-1"></div></div>'
 + grp('Conversions',236) + grp('Correspondance floue',433) + grp('Couches',163) + grp('Couleur',150);
$('helptext').innerHTML = [['Double-cliquez sur le',398],['nom du champ pour',380],["l'ajouter à l'expression.",425],['Faites un clic droit sur',412],['le nom du champ pour',420],['accéder au menu',337],['contextuel des options',430],["de chargement d'un",366],['échantillon de ses',338]]
  .map(l => `<div class="ln"><span class="t" data-x="${l[1]}">${l[0]}</span></div>`).join('');
$('vals').innerHTML = ['200023620','200034023','200034957','200066819','200068641','200068807','200068815'].map(v => `<div style="height:51px;padding-left:4px"><span class="t" data-w="216">${v}</span></div>`).join('');
/* spread each label over its set width */
document.querySelectorAll('[data-w]').forEach(e => {
  const r = document.createRange(); r.selectNodeContents(e);
  const n = e.textContent.length;
  e.style.letterSpacing = ((+e.dataset.w + 5 - r.getBoundingClientRect().width) / n).toFixed(3) + 'px';
});
document.querySelectorAll('[data-x]').forEach(e => {
  e.style.transform = `scaleX(${((+e.dataset.x + 5) / e.offsetWidth).toFixed(4)})`;
});
</script>
</body>
</html>
